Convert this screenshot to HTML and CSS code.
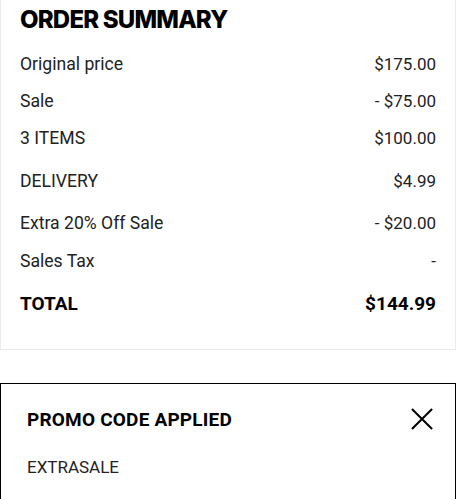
FILE: index.html
```html
<!DOCTYPE html>
<html>
<head>
<meta charset="utf-8">
<link rel="stylesheet" href="styles.css">
</head>
<body>
<section class="summary">
  <h2 class="title">ORDER SUMMARY</h2>
  <div class="row r1"><span>Original price</span><span>$175.00</span></div>
  <div class="row r2"><span>Sale</span><span>- $75.00</span></div>
  <div class="row r3"><span>3 ITEMS</span><span>$100.00</span></div>
  <div class="row r4"><span>DELIVERY</span><span>$4.99</span></div>
  <div class="row r5"><span>Extra 20% Off Sale</span><span>- $20.00</span></div>
  <div class="row r6"><span>Sales Tax</span><span>-</span></div>
  <div class="row total"><span>TOTAL</span><span>$144.99</span></div>
</section>
<section class="promo">
  <div class="promo-head">
    <span class="promo-title">PROMO CODE APPLIED</span>
    <svg class="close" width="24" height="24" viewBox="0 0 24 24"><path d="M1 1L23 23M23 1L1 23" stroke="#000" stroke-width="2.2" fill="none"/></svg>
  </div>
  <div class="code">EXTRASALE</div>
</section>
</body>
</html>
```
FILE: styles.css
```css
html, body { margin: 0; padding: 0; background: #fff; }
body { font-family: Roboto, "Liberation Sans", sans-serif; color: #222; width: 456px; }
.summary {
  border: 1px solid #ebebeb;
  border-top: none;
  padding: 0 19px 0 19px;
  height: 350px;
  box-sizing: border-box;
}
.title {
  margin: 0;
  padding-top: 5px;
  font-family: Inter, sans-serif;
  font-weight: 800;
  font-size: 24px;
  line-height: 30px;
  letter-spacing: -0.8px;
  color: #000;
}
.row {
  display: flex;
  justify-content: space-between;
  font-size: 17px;
  line-height: 20px;
  height: 20px;
}
.row span:first-child { font-size: 17.6px; }
.r1 { margin-top: 19px; }
.r2 { margin-top: 17px; }
.r3 { margin-top: 17px; }
.r4 { margin-top: 23px; }
.r5 { margin-top: 22px; }
.r6 { margin-top: 18px; }
.total { margin-top: 23px; font-weight: 700; color: #000; }
.total span, .total span:first-child { font-size: 19px; }
.promo {
  margin-top: 33px;
  border: 1.5px solid #000;
  border-bottom: none;
  height: 130px;
  box-sizing: border-box;
  padding: 0 24px 0 26px;
}
.promo-head {
  display: flex;
  justify-content: space-between;
  align-items: center;
  height: 70px;
}
.promo-title { font-weight: 700; font-size: 19px; color: #000; letter-spacing: 0.2px; }
.close { width: 22px; height: 22px; margin-right: -2px; }
.code { font-size: 17px; line-height: 20px; margin-top: 3px; color: #222; }
```
